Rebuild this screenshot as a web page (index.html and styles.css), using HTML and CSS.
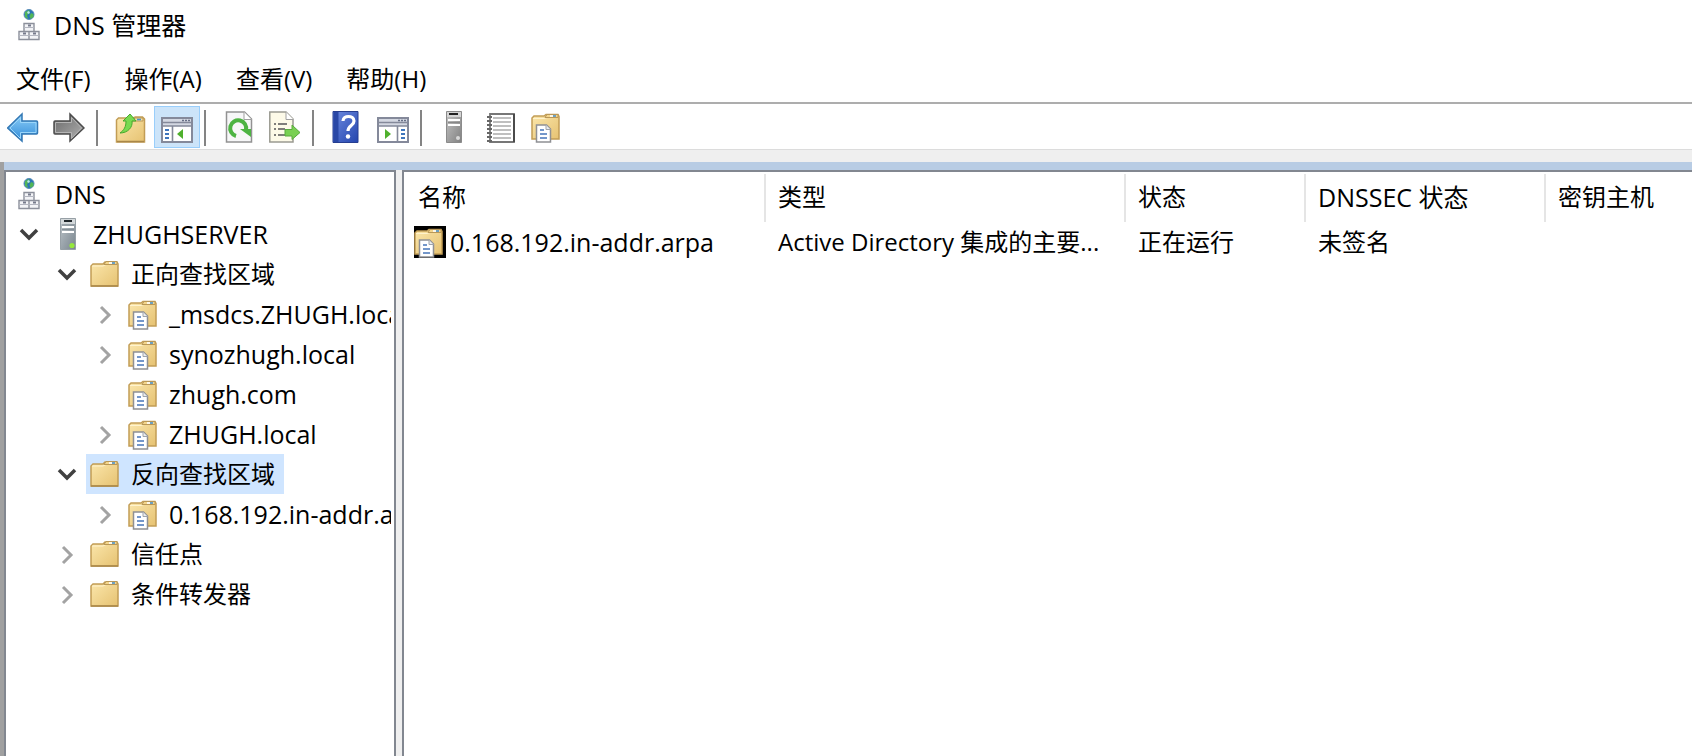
FILE: index.html
```
<!DOCTYPE html>
<html lang="zh-CN">
<head>
    <meta charset="UTF-8">
    <meta name="viewport" content="width=device-width, initial-scale=1.0">
    <title>DNS 管理器</title>
    <link rel="stylesheet" href="styles.css">
</head>
<body>
    <svg class="sprite" aria-hidden="true">
        <defs>
            <linearGradient id="folderFill" x1="0" y1="0" x2="1" y2="1">
                <stop offset="0" stop-color="#fbe7ac"/>
                <stop offset="1" stop-color="#e6c272"/>
            </linearGradient>
            <linearGradient id="blueFill" x1="0" y1="0" x2="0" y2="1">
                <stop offset="0" stop-color="#8fd0f8"/>
                <stop offset="1" stop-color="#2f8ad8"/>
            </linearGradient>
            <linearGradient id="grayFill" x1="0" y1="0" x2="1" y2="1">
                <stop offset="0" stop-color="#686868"/>
                <stop offset="1" stop-color="#b2b2b2"/>
            </linearGradient>
            <linearGradient id="towerFill" x1="0" y1="0" x2="1" y2="1">
                <stop offset="0" stop-color="#bcc4c9"/>
                <stop offset="1" stop-color="#79858e"/>
            </linearGradient>
            <linearGradient id="towerGray" x1="0" y1="0" x2="1" y2="1">
                <stop offset="0" stop-color="#c4c4c4"/>
                <stop offset="1" stop-color="#808080"/>
            </linearGradient>
            <linearGradient id="helpFill" x1="0" y1="0" x2="1" y2="1">
                <stop offset="0" stop-color="#6d8be0"/>
                <stop offset="1" stop-color="#2445ae"/>
            </linearGradient>
        </defs>
        <symbol id="dns" viewBox="0 0 32 32">
            <circle cx="15" cy="5.5" r="5" fill="#2b74b8" stroke="#5a8db8" stroke-width="1"/>
            <path d="M11 3l4-2 1 3-3 2 1 4-3-2zM17 4l2.500 1v3l-3 2-1-3z" fill="#52b656"/>
            <path d="M14 2l2 1-1 2-2-1z" fill="#b9e2f7"/>
            <g fill="#f3f4f7" stroke="#8c909b" stroke-width="1.4">
                <path d="M10 14.500h10v8H10zM5 22.500h10v8H5zM15 22.500h10v8H15z"/>
                <path d="M10 18.500h10M5 26.500h10M15 26.500h10" stroke="#b3b6c0" stroke-width="1"/>
            </g>
            <path d="M14 15.500h3v2h-3zM9 23.500h3v2H9zM19 23.500h3v2h-3z" fill="#777b8c"/>
        </symbol>
        <symbol id="server" viewBox="0 0 32 32">
            <path d="M8.5.5h15v31h-15z" fill="url(#towerFill)" stroke="#97a0a6"/>
            <path d="M9 1h14v5H9z" fill="#d3d8da"/>
            <path d="M12 3h8" stroke="#20262a" stroke-width="2"/>
            <path d="M10 9h12M10 14h12" stroke="#fff" stroke-width="2"/>
            <path d="M10 7h12M10 11.5h12" stroke="#858f96"/>
            <circle cx="20" cy="27.5" r="2.6" fill="#96e83c"/>
        </symbol>
        <symbol id="serverGray" viewBox="0 0 32 32">
            <path d="M7.5.5h15v31h-15z" fill="url(#towerGray)" stroke="#8b8b8b"/>
            <path d="M8 1h14v5H8z" fill="#d5d5d5"/>
            <path d="M10 3h9" stroke="#222" stroke-width="2"/>
            <path d="M9 9h12M9 14h12" stroke="#fff" stroke-width="2"/>
            <path d="M9 11.5h12" stroke="#888"/>
            <circle cx="19" cy="27" r="2" fill="#d8d8d8"/>
        </symbol>
        <symbol id="folder" viewBox="0 0 32 32">
            <path d="M1 28V8l2-2h10l2-2h12l1 2v22z" fill="url(#folderFill)" stroke="#c29d55" stroke-width="1.500"/>
            <path d="M2 8h11l3-1.500h11" fill="none" stroke="#fff3cd"/>
            <path d="M14 6.500l2-3h11v3z" fill="#f4d68c" stroke="#b99757"/>
            <path d="M19 5h3" stroke="#fff" stroke-width="1.600"/>
            <path d="M22 5h3" stroke="#4b93cf" stroke-width="1.600"/>
            <path d="M1 28h27" stroke="#a98748" stroke-width="1.500"/>
        </symbol>
        <symbol id="zone" viewBox="0 0 32 32">
            <path d="M1 28V7l2-2h10l2-1.500h12l1 2V28z" fill="url(#folderFill)" stroke="#c29d55" stroke-width="1.500"/>
            <path d="M2 7.500h11l3-1h11" fill="none" stroke="#fff3cd"/>
            <path d="M14 6.500l2-3h11v3z" fill="#f4d68c" stroke="#b99757"/>
            <path d="M19 5h3" stroke="#fff" stroke-width="1.600"/>
            <path d="M22 5h3" stroke="#4b93cf" stroke-width="1.600"/>
            <path d="M5.500 14h10l4 4v13h-14z" fill="#fff" stroke="#8f9094" stroke-width="1.500"/>
            <path d="M15 14v4.500h4.500" fill="#e8ebef" stroke="#a0a4aa"/>
            <path d="M9 19h4M9 23h7M9 27h7" stroke="#4776b9" stroke-width="1.700"/>
        </symbol>
        <symbol id="back" viewBox="0 0 32 32">
            <path d="M.500 17L15 3v7h14.500q1 0 1 1v11q0 1-1 1H15v7z" fill="url(#blueFill)" stroke="#3579b5" stroke-width="1.500"/>
            <path d="M3 17L13.500 6.500v5H29v10H13.500v6z" fill="none" stroke="#9bd6fa"/>
        </symbol>
        <symbol id="forward" viewBox="0 0 32 32">
            <path d="M31 17L17 3v7H2q-1 0-1 1v11q0 1 1 1h15v7z" fill="url(#grayFill)" stroke="#4d4d4d" stroke-width="1.500"/>
            <path d="M28.500 17L18.500 6.500v5h-16v10h16v6z" fill="none" stroke="#b5b5b5"/>
        </symbol>
        <symbol id="up" viewBox="0 0 32 32">
            <path d="M1.500 31V9l2-2h14l3-1h7l2 2v23z" fill="url(#folderFill)" stroke="#c29d55" stroke-width="1.500"/>
            <path d="M17 10l3-3h8v3z" fill="#f8e3a7" stroke="#b99757"/>
            <path d="M22 8.500h4" stroke="#4b93cf" stroke-width="1.600"/>
            <path d="M2 30.500h27" stroke="#a98748" stroke-width="1.500"/>
            <path d="M5 22c4-3 6-6 6-12H8l7-7 6 7h-4c1 6-4 12-12 12z" fill="#78d950" stroke="#47a92e"/>
        </symbol>
        <symbol id="tree" viewBox="0 0 32 32">
            <path d="M1 7h30v24H1z" fill="#fff" stroke="#84899a" stroke-width="2"/>
            <path d="M2 8h28v7H2z" fill="#d4d8e2"/>
            <path d="M2 11.500h28M2 15h28M11.500 15v15" stroke="#84899a" stroke-width="1.600"/>
            <path d="M21 9.500h2M24 9.500h2M27 9.500h2" stroke="#687087" stroke-width="1.600"/>
            <path d="M4 19h4M4 23h4M4 27h4" stroke="#3f76bd" stroke-width="1.800"/>
            <path d="M16 23l6-5v10z" fill="#4fb02d"/>
        </symbol>
        <symbol id="pane" viewBox="0 0 32 32">
            <path d="M1 7h30v24H1z" fill="#fff" stroke="#84899a" stroke-width="2"/>
            <path d="M2 8h28v7H2z" fill="#d4d8e2"/>
            <path d="M2 11.500h28M2 15h28M20.500 15v15" stroke="#84899a" stroke-width="1.600"/>
            <path d="M21 9.500h2M24 9.500h2M27 9.500h2" stroke="#687087" stroke-width="1.600"/>
            <path d="M24 19h4M24 23h4M24 27h4" stroke="#3f76bd" stroke-width="1.800"/>
            <path d="M14 23l-6-5v10z" fill="#4fb02d"/>
        </symbol>
        <symbol id="refresh" viewBox="0 0 32 32">
            <path d="M3.500 1h18l7 7v23h-25z" fill="#f7f7f8" stroke="#929292" stroke-width="1.500"/>
            <path d="M21 1v7.500h7.500" fill="#fff" stroke="#a0a0a0"/>
            <path d="M13 25a8 8 0 1 1 10-6" fill="none" stroke="#4eb443" stroke-width="4"/>
            <path d="M17 18h11v8z" fill="#4eb443"/>
        </symbol>
        <symbol id="export" viewBox="0 0 32 32">
            <path d="M.800 1H17l7 7v23H.800z" fill="#fdfae8" stroke="#9a9a91" stroke-width="1.500"/>
            <path d="M17 1v7.500h7.500" fill="#fff" stroke="#a0a0a0"/>
            <path d="M5 13h2M5 18h2M5 24h2M9 13h9M9 18h7M9 24h7" stroke="#555" stroke-width="1.700"/>
            <path d="M16 18.500h7V14l8 7.500-8 7V25h-7z" fill="#79d052" stroke="#58aa3d"/>
        </symbol>
        <symbol id="help" viewBox="0 0 32 32">
            <path d="M2 .5h25v31H2z" fill="url(#helpFill)" stroke="#263e91"/>
            <path d="M2.500 1h5v30h-5z" fill="#2947a6"/>
            <path d="M12 10c0-6 11-6 11 0 0 5-6 4-6 10" fill="none" stroke="#fff" stroke-width="3.200"/>
            <circle cx="17" cy="25.500" r="2.200" fill="#fff"/>
        </symbol>
        <symbol id="log" viewBox="0 0 32 32">
            <path d="M5 3h24v28H5z" fill="#fff" stroke="#777" stroke-width="1.800"/>
            <path d="M29 3v28" stroke="#4b4b4b" stroke-width="2"/>
            <path d="M8 7h18M8 11h18M8 15h18M8 19h18M8 23h18M8 27h18" stroke="#aaa" stroke-width="1.500"/>
            <path d="M2 6h5M2 10h5M2 14h5M2 18h5M2 22h5M2 26h5M2 30h5" stroke="#666" stroke-width="2"/>
        </symbol>
        <symbol id="open" viewBox="0 0 32 32">
            <path d="M8 12l8 8 8-8" fill="none" stroke="#404040" stroke-width="3.500"/>
        </symbol>
        <symbol id="closed" viewBox="0 0 32 32">
            <path d="M12 9l8 8-8 8" fill="none" stroke="#a3a3a3" stroke-width="3"/>
        </symbol>
    </svg>

    <header class="titlebar">
        <svg class="icon"><use href="#dns"/></svg>
        <h1>DNS 管理器</h1>
    </header>

    <nav class="menubar">
        <button>文件(F)</button>
        <button>操作(A)</button>
        <button>查看(V)</button>
        <button>帮助(H)</button>
    </nav>

    <div class="toolbar">
        <button class="tool" aria-label="后退"><svg class="icon"><use href="#back"/></svg></button>
        <button class="tool" aria-label="前进"><svg class="icon"><use href="#forward"/></svg></button>
        <span class="sep"></span>
        <button class="tool" aria-label="上一级"><svg class="icon"><use href="#up"/></svg></button>
        <button class="tool active" aria-label="显示/隐藏控制台树"><svg class="icon"><use href="#tree"/></svg></button>
        <span class="sep"></span>
        <button class="tool" aria-label="刷新"><svg class="icon"><use href="#refresh"/></svg></button>
        <button class="tool" aria-label="导出列表"><svg class="icon"><use href="#export"/></svg></button>
        <span class="sep"></span>
        <button class="tool" aria-label="帮助"><svg class="icon"><use href="#help"/></svg></button>
        <button class="tool" aria-label="显示/隐藏操作窗格"><svg class="icon"><use href="#pane"/></svg></button>
        <span class="sep"></span>
        <button class="tool" aria-label="新建服务器"><svg class="icon"><use href="#serverGray"/></svg></button>
        <button class="tool" aria-label="记录"><svg class="icon"><use href="#log"/></svg></button>
        <button class="tool" aria-label="新建区域"><svg class="icon"><use href="#zone"/></svg></button>
    </div>

    <main class="workspace">
        <div class="pane tree">
            <ul class="root">
                <li>
                    <div class="row"><span class="node host"><svg class="icon"><use href="#dns"/></svg>DNS</span></div>
                </li>
                <li>
                    <div class="row">
                        <button class="toggle" aria-label="折叠"><svg class="icon"><use href="#open"/></svg></button>
                        <span class="node host"><svg class="icon"><use href="#server"/></svg>ZHUGHSERVER</span>
                    </div>
                    <ul>
                        <li>
                            <div class="row">
                                <button class="toggle" aria-label="折叠"><svg class="icon"><use href="#open"/></svg></button>
                                <span class="node"><svg class="icon"><use href="#folder"/></svg>正向查找区域</span>
                            </div>
                            <ul>
                                <li class="row">
                                    <button class="toggle" aria-label="展开"><svg class="icon"><use href="#closed"/></svg></button>
                                    <span class="node host"><svg class="icon"><use href="#zone"/></svg>_msdcs.ZHUGH.local</span>
                                </li>
                                <li class="row">
                                    <button class="toggle" aria-label="展开"><svg class="icon"><use href="#closed"/></svg></button>
                                    <span class="node host"><svg class="icon"><use href="#zone"/></svg>synozhugh.local</span>
                                </li>
                                <li class="row">
                                    <span class="toggle"></span>
                                    <span class="node host"><svg class="icon"><use href="#zone"/></svg>zhugh.com</span>
                                </li>
                                <li class="row">
                                    <button class="toggle" aria-label="展开"><svg class="icon"><use href="#closed"/></svg></button>
                                    <span class="node host"><svg class="icon"><use href="#zone"/></svg>ZHUGH.local</span>
                                </li>
                            </ul>
                        </li>
                        <li>
                            <div class="row">
                                <button class="toggle" aria-label="折叠"><svg class="icon"><use href="#open"/></svg></button>
                                <span class="node selected"><svg class="icon"><use href="#folder"/></svg>反向查找区域</span>
                            </div>
                            <ul>
                                <li class="row">
                                    <button class="toggle" aria-label="展开"><svg class="icon"><use href="#closed"/></svg></button>
                                    <span class="node host"><svg class="icon"><use href="#zone"/></svg>0.168.192.in-addr.arpa</span>
                                </li>
                            </ul>
                        </li>
                        <li class="row">
                            <button class="toggle" aria-label="展开"><svg class="icon"><use href="#closed"/></svg></button>
                            <span class="node"><svg class="icon"><use href="#folder"/></svg>信任点</span>
                        </li>
                        <li class="row">
                            <button class="toggle" aria-label="展开"><svg class="icon"><use href="#closed"/></svg></button>
                            <span class="node"><svg class="icon"><use href="#folder"/></svg>条件转发器</span>
                        </li>
                    </ul>
                </li>
            </ul>
        </div>

        <div class="pane list">
            <table>
                <colgroup>
                    <col class="col-name">
                    <col class="col-type">
                    <col class="col-status">
                    <col class="col-dnssec">
                    <col>
                </colgroup>
                <thead>
                    <tr>
                        <th>名称</th>
                        <th>类型</th>
                        <th>状态</th>
                        <th class="host">DNSSEC 状态</th>
                        <th>密钥主机</th>
                    </tr>
                </thead>
                <tbody>
                    <tr>
                        <td class="name"><span class="entry host"><svg class="icon"><use href="#zone"/></svg>0.168.192.in-addr.arpa</span></td>
                        <td>Active Directory 集成的主要...</td>
                        <td>正在运行</td>
                        <td>未签名</td>
                        <td></td>
                    </tr>
                </tbody>
            </table>
        </div>
    </main>
</body>
</html>
```
FILE: styles.css
```
* {
    box-sizing: border-box;
}
body {
    display: flex;
    flex-direction: column;
    min-height: 100vh;
    margin: 0;
    font-family: 'Open Sans', 'Noto Sans CJK SC', sans-serif;
    font-size: 24px;
    line-height: 40px;
    color: #000;
    background-color: #efefef;
}
button {
    font: inherit;
    color: inherit;
    background: none;
    border: none;
    padding: 0;
}
ul {
    list-style: none;
    margin: 0;
    padding: 0;
}
.sprite {
    position: absolute;
    width: 0;
    height: 0;
}
.icon {
    display: block;
    flex: none;
    width: 32px;
    height: 32px;
}
.host {
    font-size: 25px;
}
.titlebar {
    display: flex;
    align-items: center;
    gap: 8px;
    height: 50px;
    padding-left: 14px;
    background-color: #fff;
}
.titlebar h1 {
    margin: 0;
    font-size: 25px;
    font-weight: 400;
}
.menubar {
    display: flex;
    gap: 34px;
    padding: 9px 16px 3px;
    border-bottom: 2px solid #adadad;
    background-color: #fff;
    white-space: nowrap;
}
.toolbar {
    display: flex;
    padding: 2px 0 1px;
    border-bottom: 1px solid #dcdcdc;
    background-color: #fff;
}
.tool {
    display: flex;
    align-items: center;
    justify-content: center;
    width: 46px;
    height: 42px;
    border: 1px solid transparent;
}
.tool:hover,
.tool.active {
    background-color: #cce4f9;
    border-color: #99cefb;
}
.sep {
    width: 16px;
    height: 36px;
    margin-top: 4px;
    background: linear-gradient(#848484, #848484) 4px 0 / 2px 100% no-repeat;
}
.workspace {
    display: flex;
    flex: 1;
    gap: 6px;
    margin-top: 12px;
    padding-top: 8px;
    border-left: 4px solid #a0a0a0;
    background: linear-gradient(#b8cce4, #b8cce4) 0 0 / 100% 8px no-repeat;
}
.pane {
    border: 2px solid #828790;
    border-bottom: none;
    background-color: #fff;
    overflow: hidden;
}
.tree {
    flex: none;
    width: 392px;
    padding: 2px 3px 0 4px;
}
.root {
    overflow: hidden;
}
.root ul {
    padding-left: 38px;
}
.row {
    display: flex;
    height: 40px;
    white-space: nowrap;
}
.toggle {
    display: flex;
    flex: none;
    align-items: center;
    justify-content: center;
    width: 38px;
}
.node {
    display: flex;
    align-items: center;
    gap: 9px;
    padding: 0 9px 0 4px;
}
.node.selected {
    background-color: #cfe5ff;
}
.list {
    flex: 1;
    padding-left: 2px;
    border-right: none;
}
table {
    width: 100%;
    table-layout: fixed;
    border-collapse: collapse;
}
.col-name,
.col-type {
    width: 360px;
}
.col-status {
    width: 180px;
}
.col-dnssec {
    width: 240px;
}
th,
td {
    padding: 0 0 0 12px;
    font-weight: 400;
    text-align: left;
    white-space: nowrap;
    overflow: hidden;
}
th {
    height: 50px;
    background: linear-gradient(#e5e5e5, #e5e5e5) right 2px / 2px 48px no-repeat;
}
th:last-child {
    background: none;
}
.name {
    padding-left: 8px;
}
.entry {
    display: flex;
    align-items: center;
    gap: 4px;
}
.entry .icon {
    background-color: #000;
}
```
